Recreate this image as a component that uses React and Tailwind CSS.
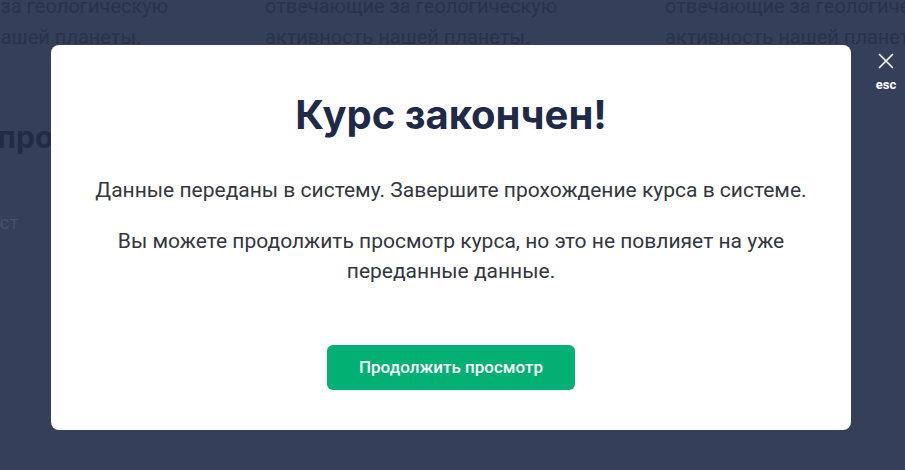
export default function App() {
  return (
    <div className="relative w-full h-[470px] overflow-hidden bg-[#343f59] font-['Roboto',sans-serif]">
      {/* page behind the overlay */}
      <div className="mt-[-9px] ml-[-124px] flex flex-row text-[20px] leading-[31px] text-[#28324c]">
        <div className="w-[389px] shrink-0">
          <p>отвечающие за геологическую</p>
          <p>активность нашей планеты.</p>
        </div>
        <div className="w-[400px] shrink-0">
          <p>отвечающие за геологическую</p>
          <p>активность нашей планеты.</p>
        </div>
        <div className="w-[400px] shrink-0">
          <p>отвечающие за геологическую</p>
          <p>активность нашей планеты.</p>
        </div>
      </div>
      <div className="ml-[-66px] mt-[64px] font-['Inter',sans-serif] text-[30px] font-bold leading-[40px] text-[#212b46]">Как прошёл курс</div>
      <div className="ml-[-21px] mt-[52px] text-[19px] text-[#465069]">Тест</div>

      {/* modal */}
      <div className="absolute inset-0 flex items-start pt-[45px] pl-[51px]">
        <div className="w-[800px] rounded-lg bg-white px-10 pt-10 pb-10 text-center">
          <h2 className="font-['Inter',sans-serif] text-[40px] font-bold leading-[60px] text-[#1e2a48]">Курс закончен!</h2>
          <p className="mt-[30px] text-[21px] leading-[30px] text-[#333640]">
            Данные переданы в систему. Завершите прохождение курса в системе.
          </p>
          <p className="mt-[21px] text-[21px] leading-[30px] text-[#333640]">
            Вы можете продолжить просмотр курса, но это не повлияет на уже переданные данные.
          </p>
          <button className="mt-[59px] h-[45px] w-[248px] rounded-md bg-[#02b074] text-[17px] font-medium text-white">
            Продолжить просмотр
          </button>
        </div>
      </div>

      {/* close */}
      <div className="absolute top-[52px] right-[7px] flex w-[24px] flex-col items-center text-white">
        <svg width="18" height="18" viewBox="0 0 18 18" fill="none" stroke="white" strokeWidth="1.6">
          <path d="M2 2L16 16M16 2L2 16" />
        </svg>
        <span className="mt-[7px] text-[13px] font-bold leading-[16px]">esc</span>
      </div>
    </div>
  )
}
